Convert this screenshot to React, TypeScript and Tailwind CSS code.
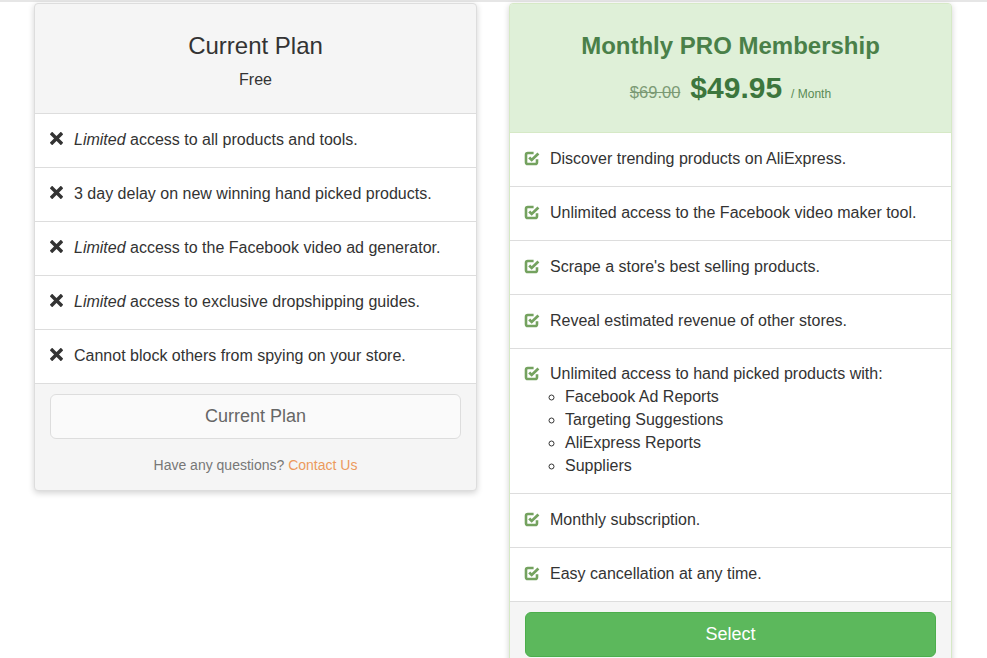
import React from 'react'

const freeFeatures: { limited?: boolean; text: string }[] = [
  { limited: true, text: 'access to all products and tools.' },
  { text: '3 day delay on new winning hand picked products.' },
  { limited: true, text: 'access to the Facebook video ad generator.' },
  { limited: true, text: 'access to exclusive dropshipping guides.' },
  { text: 'Cannot block others from spying on your store.' },
]

function TimesIcon() {
  return (
    <svg viewBox="0 0 12 12" className="w-[13px] h-[13px] shrink-0 mt-[4px]">
      <path d="M2 2L10 10M10 2L2 10" stroke="#333" strokeWidth="3.2" strokeLinecap="square" />
    </svg>
  )
}

function CheckIcon() {
  return (
    <svg viewBox="0 0 16 16" className="w-[16px] h-[16px] shrink-0 mt-[3px]" fill="none">
      <path
        d="M13 9.2v3A1.8 1.8 0 0 1 11.2 14H3.8A1.8 1.8 0 0 1 2 12.2V4.8A1.8 1.8 0 0 1 3.8 3H9.6"
        stroke="#74a25f"
        strokeWidth="2.6"
      />
      <path d="M5.2 7.4l2.5 2.5L14.4 3.4" stroke="#74a25f" strokeWidth="2.8" />
    </svg>
  )
}

function FreeCard() {
  return (
    <div className="w-[443px] shrink-0 border border-[#dddddd] rounded-[4px] bg-[#f5f5f5] shadow-[0_2px_6px_rgba(0,0,0,0.18)] self-start overflow-hidden">
      <div className="h-[110px] flex flex-col items-center border-b border-[#dddddd]">
        <div className="text-[24px] leading-[30px] mt-[27px] text-[#333]">Current Plan</div>
        <div className="text-[16px] leading-[22px] mt-[8px] text-[#333]">Free</div>
      </div>
      <ul className="bg-white">
        {freeFeatures.map((f, i) => (
          <li
            key={i}
            className="flex gap-[11px] px-[15px] pt-[14px] pb-[16px] leading-[23px] text-[16px] text-[#333] border-b border-[#dddddd]"
          >
            <TimesIcon />
            <span>
              {f.limited && <em>Limited </em>}
              {f.text}
            </span>
          </li>
        ))}
      </ul>
      <div className="px-[15px] pt-[10px] pb-[15px]">
        <div className="h-[45px] rounded-[6px] border border-[#dddddd] bg-[#fafafa] flex items-center justify-center text-[18px] text-[#666]">
          Current Plan
        </div>
        <div className="text-center text-[14px] text-[#777] mt-[16px] leading-5">
          Have any questions? <span className="text-[#ec9a5c]">Contact Us</span>
        </div>
      </div>
    </div>
  )
}

const proFeatures = [
  'Discover trending products on AliExpress.',
  'Unlimited access to the Facebook video maker tool.',
  "Scrape a store's best selling products.",
  'Reveal estimated revenue of other stores.',
]

const rowClass =
  'flex gap-[10px] px-[14px] pt-[14px] pb-[16px] leading-[23px] text-[16px] text-[#333] border-b border-[#dddddd]'

function ProCard() {
  return (
    <div className="w-[443px] shrink-0 border border-[#d6e9c6] rounded-[4px] bg-[#f5f5f5] shadow-[0_2px_6px_rgba(0,0,0,0.18)] overflow-hidden">
      <div className="h-[129px] flex flex-col items-center bg-[#dff0d8] border-b border-[#d6e9c6]">
        <div className="text-[24px] leading-[30px] mt-[27px] font-bold text-[#4a8049]">Monthly PRO Membership</div>
        <div className="flex items-baseline mt-[9px] text-[#3c763d]">
          <span className="text-[16.5px] line-through text-[#7b9a74]">$69.00</span>
          <span className="text-[30px] font-bold ml-[10px] leading-[36px]">$49.95</span>
          <span className="text-[12px] ml-[9px] text-[#5a8a55]">/ Month</span>
        </div>
      </div>
      <ul className="bg-white">
        {proFeatures.map((t) => (
          <li key={t} className={rowClass}>
            <CheckIcon />
            <span>{t}</span>
          </li>
        ))}
        <li className="flex gap-[10px] px-[14px] pt-[13px] pb-[16px] leading-[23px] text-[16px] text-[#333] border-b border-[#dddddd]">
          <CheckIcon />
          <div>
            <div>Unlimited access to hand picked products with:</div>
            <ul className="list-[circle] pl-[15px]">
              <li>Facebook Ad Reports</li>
              <li>Targeting Suggestions</li>
              <li>AliExpress Reports</li>
              <li>Suppliers</li>
            </ul>
          </div>
        </li>
        {['Monthly subscription.', 'Easy cancellation at any time.'].map((t) => (
          <li key={t} className={rowClass}>
            <CheckIcon />
            <span>{t}</span>
          </li>
        ))}
      </ul>
      <div className="px-[15px] pt-[10px] pb-[15px]">
        <div className="h-[45px] rounded-[6px] border border-[#4cae4c] bg-[#5cb85c] flex items-center justify-center text-[18px] text-white">
          Select
        </div>
        <div className="h-[40px]" />
      </div>
    </div>
  )
}

export default function App() {
  return (
    <div className="min-h-screen bg-white font-['Liberation_Sans',Arial,sans-serif] border-t-2 border-[#e6e6e6]">
      <div className="flex gap-[32px] pl-[34px] pt-[1px]">
        <FreeCard />
        <ProCard />
      </div>
    </div>
  )
}
